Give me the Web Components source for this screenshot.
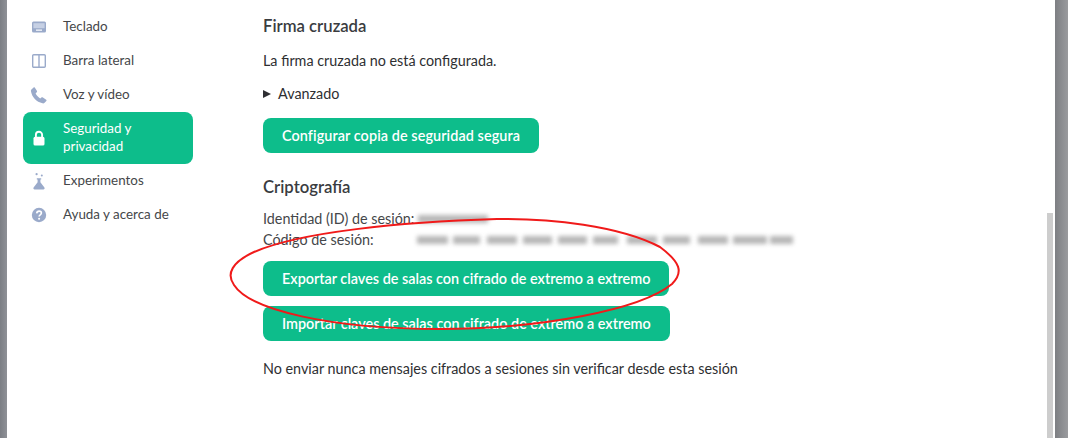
<!DOCTYPE html>
<html lang="es">
<head>
<meta charset="utf-8">
<title>Ajustes</title>
<style>
	html, body { margin: 0; height: 100%; overflow: hidden; background: #fff; }
</style>
</head>
<body>
<settings-dialog>
	<settings-nav slot="nav">
		<nav-item label="Teclado" icon="keyboard"></nav-item>
		<nav-item label="Barra lateral" icon="sidebar"></nav-item>
		<nav-item label="Voz y vídeo" icon="phone"></nav-item>
		<nav-item label="Seguridad y privacidad" icon="lock" active></nav-item>
		<nav-item label="Experimentos" icon="flask"></nav-item>
		<nav-item label="Ayuda y acerca de" icon="help"></nav-item>
	</settings-nav>
	<security-panel slot="main"></security-panel>
</settings-dialog>

<script>
const ICONS = {
	keyboard: '<rect x="1" y="2.5" width="14" height="11" rx="1.5" fill="currentColor"/><rect x="2.4" y="4.2" width="11.2" height="5" fill="#c6d0e4"/><rect x="5" y="10.4" width="6" height="1.6" fill="#e4e9f3"/>',
	sidebar: '<rect x="1.7" y="1.7" width="12.6" height="12.6" rx="1" fill="none" stroke="currentColor" stroke-width="1.4"/><path d="M8 1.7V14.3" stroke="currentColor" stroke-width="1.4"/>',
	phone: '<path d="M.4 2.4 2.6.5c.4-.3 1-.2 1.3.2L6 4c.2.4.1.9-.2 1.2L4.6 6.3c.7 2 2.4 3.9 4.6 5.1l1.5-1.1c.4-.2.9-.2 1.2.1l3.3 2.4c.4.3.5.9.1 1.3l-1.7 1.7c-.6.5-1.4.7-2.1.5C5.4 15.1 1 10.4-.1 4.1-.2 3.5 0 2.8.4 2.4Z" fill="currentColor"/>',
	lock: '<path d="M4.9 7.5V4.8a3.1 3.1 0 0 1 6.2 0v2.7" fill="none" stroke="currentColor" stroke-width="1.9"/><rect x="2.5" y="6.8" width="11" height="8.7" rx="1.6" fill="currentColor"/>',
	flask: '<circle cx="5.6" cy="1.2" r="1.1" fill="currentColor"/><circle cx="10.8" cy="2.4" r="1" fill="currentColor"/><path d="M5.8 5.2h4.4v1.3h-.8v2.8l4 5.2c.6.9 0 2-1 2H3.6c-1 0-1.6-1.1-1-2l4-5.200V6.500h-.8Z" fill="currentColor"/>',
	help: '<circle cx="8" cy="8" r="7.2" fill="currentColor"/><path d="M5.7 6.300C5.900 4.900 6.900 4.100 8.100 4.100c1.400 0 2.300.9 2.300 2 0 1.800-2.300 1.800-2.300 3.500" fill="none" stroke="#fff" stroke-width="1.6"/><circle cx="8.1" cy="11.7" r="1.05" fill="#fff"/>'
};

class SettingsDialog extends HTMLElement {
	constructor() {
		super();
		const shadow = this.attachShadow({ mode: 'open' });
		shadow.innerHTML = `
<style>
	:host {
		display: flex;
		width: 1068px;
		height: 438px;
		overflow: hidden;
		font-family: Lato, "Open Sans", sans-serif;
		color: #2e2f32;
		position: relative;
	}
	.backdrop-left {
		width: 7px;
		background: linear-gradient(90deg, #7b7e84, #8f9197);
	}
	.backdrop-right {
		width: 13px;
		background: linear-gradient(90deg, #7d7f83, #9a9b9e);
	}
	.dialog {
		flex: 1;
		display: flex;
		background: #fff;
		min-width: 0;
	}
	.nav { width: 186px; padding: 10px 0 0 16px; box-sizing: content-box; flex: none; }
	.main { flex: 1; padding: 0 0 0 54px; min-width: 0; }
	.scrollbar {
		width: 6px;
		margin: 213px 2px 0 0;
		background: #cdcdcd;
		flex: none;
	}
	.mark {
		position: absolute;
		left: 0;
		top: 0;
		pointer-events: none;
	}
</style>
<div class="backdrop-left"></div>
<div class="dialog">
	<div class="nav"><slot name="nav"></slot></div>
	<div class="main"><slot name="main"></slot></div>
	<div class="scrollbar"></div>
</div>
<div class="backdrop-right"></div>
<svg class="mark" width="1068" height="438" viewBox="0 0 1068 438">
	<path d="M497 219C400 222 300 232 254 252C232 262 226 274 234 285C250 310 330 329 440 329C540 329 640 310 672 284C684 272 680 262 660 247C620 226 550 218 497 219Z" fill="none" stroke="#f01a1a" stroke-width="2"/>
</svg>
		`;
	}
}

class SettingsNav extends HTMLElement {
	constructor() {
		super();
		const shadow = this.attachShadow({ mode: 'open' });
		shadow.innerHTML = `
<style>
	:host { display: flex; flex-direction: column; width: 170px; }
</style>
<slot></slot>
		`;
	}
}

class NavItem extends HTMLElement {
	constructor() {
		super();
		const shadow = this.attachShadow({ mode: 'open' });
		const icon = ICONS[this.getAttribute('icon')];
		shadow.innerHTML = `
<style>
	:host {
		display: flex;
		align-items: center;
		gap: 16px;
		padding: 7px 16px 9px 8px;
		font-size: 13.4px;
		line-height: 18px;
		color: #45474a;
		border-radius: 8px;
	}
	:host([active]) {
		background: #0dbd8b;
		color: #fff;
	}
	svg {
		width: 16px;
		height: 16px;
		margin-top: 2px;
		flex: none;
		color: #9aaaca;
		overflow: visible;
	}
	:host([active]) svg { color: #fff; }
</style>
<svg viewBox="0 0 16 16">${icon}</svg>
<span>${this.getAttribute('label')}</span>
		`;
	}
}

class GreenButton extends HTMLElement {
	constructor() {
		super();
		const shadow = this.attachShadow({ mode: 'open' });
		shadow.innerHTML = `
<style>
	:host {
		display: block;
		width: fit-content;
		padding: 8px 19px;
		font-size: 14.4px;
		line-height: 19px;
		font-weight: 600;
		color: #fff;
		background: #0dbd8b;
		border-radius: 8px;
	}
</style>
<slot></slot>
		`;
	}
}

class SecurityPanel extends HTMLElement {
	constructor() {
		super();
		const shadow = this.attachShadow({ mode: 'open' });
		const code = [[31, 0], [27, 5], [30, 7], [29, 6], [29, 6], [25, 6], [30, 9], [27, 6], [30, 8], [34, 5], [23, 3]];
		shadow.innerHTML = `
<style>
	:host {
		display: flex;
		flex-direction: column;
		font-size: 14.35px;
		line-height: 18px;
		color: #2e2f32;
	}
	h3 {
		margin: 0;
		font-size: 16.7px;
		font-weight: 600;
		line-height: 20px;
		color: #3a3c3f;
	}
	p { margin: 0; }
	.first { margin-top: 16px; }
	.cross { margin-top: 16px; }
	.advanced {
		margin-top: 15px;
		display: flex;
		align-items: center;
		gap: 7px;
	}
	.advanced i {
		width: 0;
		height: 0;
		border-left: 8px solid #2e2f32;
		border-top: 4px solid transparent;
		border-bottom: 4px solid transparent;
	}
	.backup { margin-top: 15px; letter-spacing: .08px; }
	.crypto { margin-top: 24px; }
	.ids {
		margin-top: 13px;
		display: grid;
		grid-template-columns: 154px 1fr;
		row-gap: 3px;
		color: #45474a;
	}
	.smudges { display: flex; align-items: center; }
	.smudges b {
		height: 8px;
		background: #999;
		filter: blur(2.2px);
		opacity: .7;
		display: block;
	}
	.actions { margin-top: 12px; display: flex; flex-direction: column; gap: 10px; }
	.note { margin-top: 19px; }
</style>
<h3 class="first">Firma cruzada</h3>
<p class="cross">La firma cruzada no está configurada.</p>
<div class="advanced"><i></i><span>Avanzado</span></div>
<green-button class="backup">Configurar copia de seguridad segura</green-button>
<h3 class="crypto">Criptografía</h3>
<div class="ids">
	<span>Identidad (ID) de sesión:</span>
	<div class="smudges"><b style="width:70px;margin-left:1px"></b></div>
	<span>Código de sesión:</span>
	<div class="smudges">${code.map(([w, gap]) => `<b style="width:${w}px;margin-left:${gap}px"></b>`).join('')}</div>
</div>
<div class="actions">
	<green-button>Exportar claves de salas con cifrado de extremo a extremo</green-button>
	<green-button>Importar claves de salas con cifrado de extremo a extremo</green-button>
</div>
<p class="note">No enviar nunca mensajes cifrados a sesiones sin verificar desde esta sesión</p>
		`;
	}
}

customElements.define('settings-dialog', SettingsDialog);
customElements.define('settings-nav', SettingsNav);
customElements.define('nav-item', NavItem);
customElements.define('green-button', GreenButton);
customElements.define('security-panel', SecurityPanel);
</script>
</body>
</html>
